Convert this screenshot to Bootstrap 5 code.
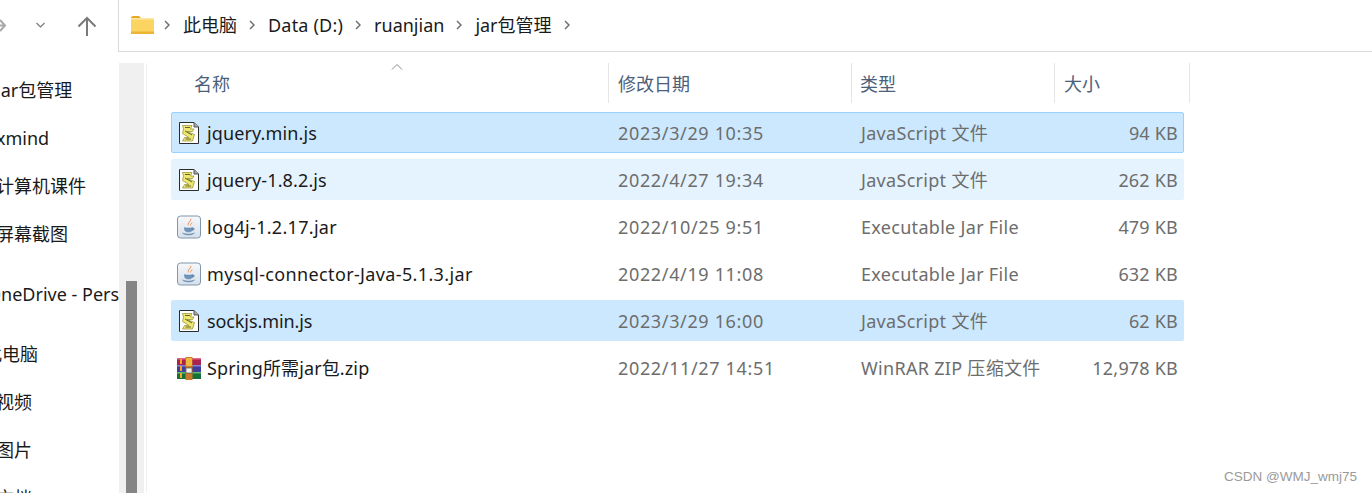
<!doctype html>
<html lang="zh"><head><meta charset="utf-8"><title>jar包管理</title>
<link href="https://cdn.jsdelivr.net/npm/bootstrap@5.3.0/dist/css/bootstrap.min.css" rel="stylesheet">
<style>
html,body{height:493px;overflow:hidden;background:#fff}
body{font-family:"Noto Sans","Noto Sans CJK SC",sans-serif;font-size:18px;line-height:24px;color:#1a1a1a;width:1372px;position:relative}
.topbar{height:63px}
.tool-zone{width:118px;height:52px}
.tool-zone svg{display:block}
.addr{width:1254px;height:52px;border:1px solid #d9d9d9;border-right:0;border-top:0;padding:0 0 2px 12px}
.folder-ic{margin-right:10px}
.crumb{margin-right:12px}
.crumb-wide{letter-spacing:.2px}
.crumb-sep{margin-right:13px}
.crumb-sep-first{margin-right:13px}
.lower{height:430px}
.side{width:119px;overflow:hidden;padding-top:3px}
.side-item{height:48px;line-height:49px;white-space:nowrap;margin-left:-4px}
.side-top{margin-left:-16px}
.side-one{margin-left:-13px}
.side-gap{margin-top:12px}
.track{width:25px;background:#f0f0f0;padding:218px 7px 0}
.thumb{height:300px;background:#858585}
.strip{width:3px;border-right:1px solid #f0f0f0}
.pane{width:1225px;position:relative}
.heads{padding-left:39px;height:40px;margin-bottom:9px}
.hcell{border-right:1px solid #e5e5e5;color:#4c607a;line-height:42px;padding-left:8px}
.hname{width:423px}.hdate{width:243px;padding-left:9px}.htype{width:203px}.hsize{width:135px;padding-left:9px}
.sort-mark{position:absolute;left:244px;top:0}
.frow{display:grid;grid-template-columns:446px 243px 180px 142px;width:1013px;height:41px;margin:0 0 6px 24px;align-items:center;border:1px solid transparent;border-radius:2px}
.frow-sel{background:#cce8ff}
.frow-focus{background:#cce8ff;border-color:#99d1ff}
.frow-hov{background:#e5f3ff}
.fname{display:flex;align-items:center;gap:6px;padding-left:5px;white-space:nowrap}
.fname svg{flex:none}
.ls-s{letter-spacing:-.1px}
.ls-a{letter-spacing:.12px}
.ls-b{letter-spacing:.3px}
.ls-c{letter-spacing:.36px}
.fmeta{color:#6d6d6d;letter-spacing:.3px;white-space:nowrap}
.fdate{letter-spacing:.65px}
.fsize{text-align:right;padding-right:5px;letter-spacing:.2px}
.wm{position:absolute;right:15px;bottom:8px;font:13.5px/16px "Liberation Sans",sans-serif;color:#9a9a9a}
</style></head><body>
<svg width="0" height="0" class="position-absolute">
<defs>
<linearGradient id="jg" x1="0" y1="0" x2="0" y2="1"><stop offset="0" stop-color="#f7f8fa"/><stop offset="1" stop-color="#d6e0ea"/></linearGradient>
<symbol id="ic-js" viewBox="0 0 24 24">
<path d="M2.500 1.500H17L21.500 6V22.500H2.500Z" fill="#fff" stroke="#2b2b2b"/>
<path d="M17 1.500V6H21.500" fill="#a9a9a9" stroke="#555"/>
<path d="M5.500 4.500H15L13.500 8H17L15.500 10.500H10L17.500 13.500 15.500 20H5.500L7.500 16.500H12L5.500 12.500 6.500 8Z" fill="#efe86e" stroke="#8f8a3a" stroke-width=".7"/>
<path d="M8 6.500H13M8 10L15 14M8.500 18H14" stroke="#55552a" stroke-width=".9" fill="none"/>
</symbol>
<symbol id="ic-jar" viewBox="0 0 24 24">
<rect x=".5" y="1" width="23" height="22" rx="3" fill="url(#jg)" stroke="#7f97ad"/>
<path d="M14 3C15.500 6 10.500 7 11.500 11C9 8.500 13.500 6.500 14 3ZM15.500 7C15.500 9 13 9.500 13.200 11.500C12.500 9.500 14.500 8.500 15.500 7Z" fill="#e8762a"/>
<path d="M7.500 12.500C9 13.300 14 13.300 15.500 12.500V14C15.500 16 14 17 11.500 17C9 17 7.500 16 7.500 14ZM15.500 13C18 12.500 18 15 15 15.500M5.500 18C8 19.500 15 19.500 17.500 18C15 20.500 8 20.500 5.500 18Z" fill="#6e94bb" stroke="#5a81aa" stroke-width=".5"/>
</symbol>
<symbol id="ic-rar" viewBox="0 0 24 24">
<rect x="0" y="2" width="24" height="7" fill="#a8234f"/><rect x="0" y="2" width="24" height="1.500" fill="#e3698f"/>
<rect x="0" y="9" width="24" height="7" fill="#3f3c9c"/><rect x="0" y="9" width="24" height="1.500" fill="#8482d6"/>
<rect x="0" y="16" width="24" height="7" fill="#17703a"/><rect x="0" y="16" width="24" height="1.500" fill="#5cba72"/>
<rect x="3" y="3" width="2" height="5" fill="#f1a81f"/><rect x="3" y="10" width="2" height="5" fill="#f1a81f"/><rect x="3" y="17" width="2" height="5" fill="#f1a81f"/>
<rect x="8.500" y="1" width="7" height="23" fill="#c77a2a"/><rect x="9" y="2" width="6" height="8" rx="1" fill="#f0b93a"/>
<rect x="9" y="12" width="6" height="5" fill="#f2f2e6" stroke="#444" stroke-width=".6"/>
</symbol>
</defs></svg>

<div class="topbar d-flex align-items-start">
<div class="tool-zone d-flex align-items-center position-relative">
<svg width="118" height="52" viewBox="0 0 118 52" fill="none" stroke="#7a7a7a">
<path d="M-8 25.500H5M0 20L5 25.500L0 31" stroke="#a8a8a8" stroke-width="2"/>
<path d="M36.500 23L40.500 27L44.500 23" stroke-width="1.200"/>
<path d="M87 36V18M78.500 26.500L87 18L95.500 26.500" stroke-width="2"/>
</svg>
</div>
<div class="addr d-flex align-items-center">
<svg class="folder-ic flex-none" width="23" height="18" viewBox="0 0 23 18"><path d="M0 2C0 1 1 0 2 0H8L10 2H0Z" fill="#e8a824"/><rect y="2" width="23" height="16" rx="1" fill="#fcd462"/><rect y="2" width="23" height="1.500" fill="#fbe9a8"/><rect y="15.500" width="23" height="2.500" fill="#eeb535"/></svg>
<svg class="crumb-sep-first" width="6" height="10" viewBox="0 0 6 10" fill="none" stroke="#6f6f6f" stroke-width="1.500"><path d="M1 1L5 5L1 9"/></svg>
<span class="crumb">此电脑</span>
<svg class="crumb-sep" width="6" height="10" viewBox="0 0 6 10" fill="none" stroke="#6f6f6f" stroke-width="1.500"><path d="M1 1L5 5L1 9"/></svg>
<span class="crumb crumb-wide">Data (D:)</span>
<svg class="crumb-sep" width="6" height="10" viewBox="0 0 6 10" fill="none" stroke="#6f6f6f" stroke-width="1.500"><path d="M1 1L5 5L1 9"/></svg>
<span class="crumb">ruanjian</span>
<svg class="crumb-sep" width="6" height="10" viewBox="0 0 6 10" fill="none" stroke="#6f6f6f" stroke-width="1.500"><path d="M1 1L5 5L1 9"/></svg>
<span class="crumb">jar包管理</span>
<svg class="crumb-sep" width="6" height="10" viewBox="0 0 6 10" fill="none" stroke="#6f6f6f" stroke-width="1.500"><path d="M1 1L5 5L1 9"/></svg>
</div>
</div>

<div class="lower d-flex">
<div class="side">
<div class="side-item">jar包管理</div>
<div class="side-item">xmind</div>
<div class="side-item">计算机课件</div>
<div class="side-item">屏幕截图</div>
<div class="side-item side-one side-gap">OneDrive - Personal</div>
<div class="side-item side-top side-gap">此电脑</div>
<div class="side-item">视频</div>
<div class="side-item">图片</div>
<div class="side-item">文档</div>
</div>
<div class="track"><div class="thumb"></div></div>
<div class="strip"></div>
<div class="pane">
<svg class="sort-mark" width="12" height="8" viewBox="0 0 12 8" fill="none" stroke="#8a8a8a"><path d="M1 6.500L6 1.500L11 6.500"/></svg>
<div class="heads d-flex">
<div class="hcell hname">名称</div>
<div class="hcell hdate">修改日期</div>
<div class="hcell htype">类型</div>
<div class="hcell hsize">大小</div>
</div>
<div class="frow frow-focus"><div class="fname ls-a"><svg width="24" height="24"><use href="#ic-js"/></svg>jquery.min.js</div><div class="fmeta fdate">2023/3/29 10:35</div><div class="fmeta">JavaScript 文件</div><div class="fmeta fsize">94 KB</div></div>
<div class="frow frow-hov"><div class="fname ls-a"><svg width="24" height="24"><use href="#ic-js"/></svg>jquery-1.8.2.js</div><div class="fmeta fdate">2022/4/27 19:34</div><div class="fmeta">JavaScript 文件</div><div class="fmeta fsize">262 KB</div></div>
<div class="frow"><div class="fname ls-b"><svg width="24" height="24"><use href="#ic-jar"/></svg>log4j-1.2.17.jar</div><div class="fmeta fdate">2022/10/25 9:51</div><div class="fmeta">Executable Jar File</div><div class="fmeta fsize">479 KB</div></div>
<div class="frow"><div class="fname ls-c"><svg width="24" height="24"><use href="#ic-jar"/></svg>mysql-connector-Java-5.1.3.jar</div><div class="fmeta fdate">2022/4/19 11:08</div><div class="fmeta">Executable Jar File</div><div class="fmeta fsize">632 KB</div></div>
<div class="frow frow-sel"><div class="fname ls-s"><svg width="24" height="24"><use href="#ic-js"/></svg>sockjs.min.js</div><div class="fmeta fdate">2023/3/29 16:00</div><div class="fmeta">JavaScript 文件</div><div class="fmeta fsize">62 KB</div></div>
<div class="frow"><div class="fname ls-a"><svg width="24" height="24"><use href="#ic-rar"/></svg>Spring所需jar包.zip</div><div class="fmeta fdate">2022/11/27 14:51</div><div class="fmeta">WinRAR ZIP 压缩文件</div><div class="fmeta fsize">12,978 KB</div></div>
</div>
</div>
<div class="wm">CSDN @WMJ_wmj75</div>
<script src="https://cdn.jsdelivr.net/npm/bootstrap@5.3.0/dist/js/bootstrap.bundle.min.js"></script>
</body></html>
